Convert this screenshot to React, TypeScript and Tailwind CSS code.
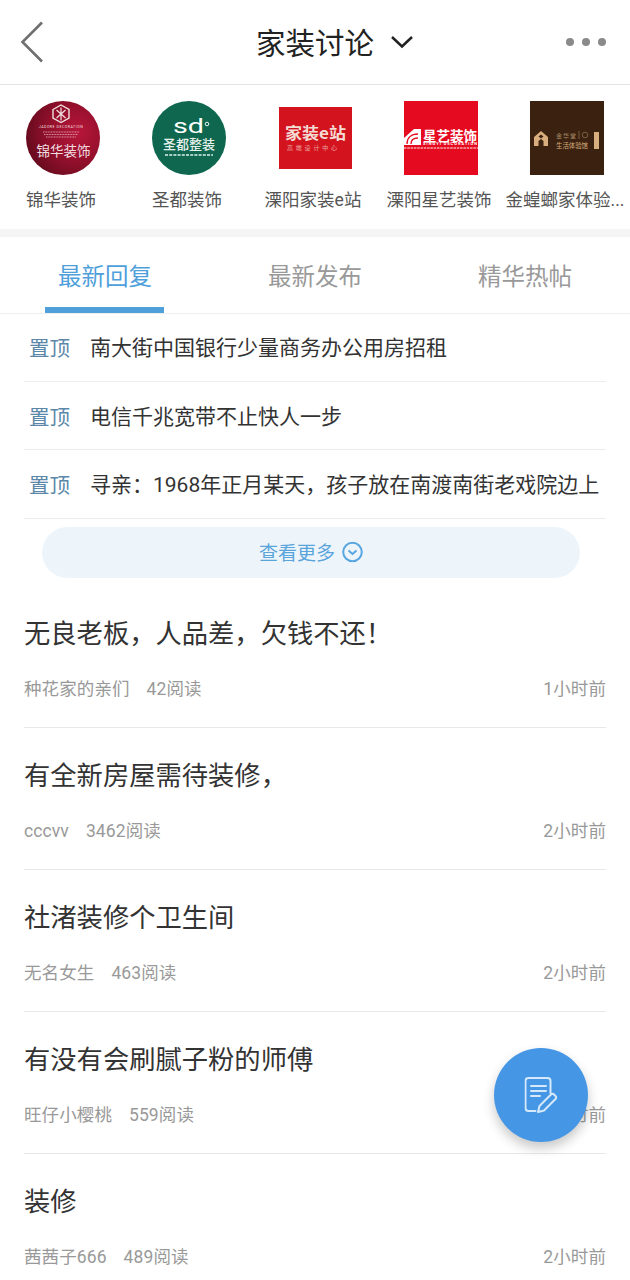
import React from "react";

const FONT = "font-['Roboto','Noto_Sans_CJK_SC',sans-serif]";
const CJK = "Noto Sans CJK SC, sans-serif";

function Logo1() {
  return (
    <svg width="74" height="74" viewBox="0 0 74 74" className="block">
      <defs>
        <radialGradient id="r1" cx="0.7" cy="0.42" r="0.8">
          <stop offset="0" stopColor="#b8163a" />
          <stop offset="0.55" stopColor="#8e0f2a" />
          <stop offset="1" stopColor="#5a0a1a" />
        </radialGradient>
      </defs>
      <circle cx="37" cy="37" r="37" fill="url(#r1)" />
      <path d="M27 8.500l8-4.500 8 4.500v8.500l-8 4.500-8-4.500z" fill="none" stroke="#efe3e0" strokeWidth="1.400" />
      <path d="M30.500 9l9 8M39.500 9l-9 8M35 6.500v13" stroke="#efe3e0" strokeWidth="1.200" />
      <text x="35" y="27" textAnchor="middle" fontSize="3.600" fill="#eedfdf" letterSpacing="0.500" fontFamily="Roboto, sans-serif">JADORE DECORATION</text>
      <path d="M17 31h36M18 33.500h34M20 36h30" stroke="#dca9b3" strokeWidth="0.900" strokeDasharray="1 .6" />
      <text x="37.500" y="54.500" textAnchor="middle" fontSize="13.500" fill="#f1dde0" fontFamily={CJK}>锦华装饰</text>
    </svg>
  );
}

function Logo2() {
  return (
    <svg width="74" height="74" viewBox="0 0 74 74" className="block">
      <circle cx="37" cy="37" r="37" fill="#0e674e" />
      <text x="21" y="32" fontSize="20" fill="#fff" textLength="31" lengthAdjust="spacingAndGlyphs" fontFamily="Roboto, sans-serif">sd</text>
      <circle cx="55" cy="23" r="1.800" fill="none" stroke="#fff" strokeWidth="0.900" />
      <text x="37" y="48" textAnchor="middle" fontSize="13" fontWeight="500" fill="#e6f1ec" fontFamily={CJK}>圣都整装</text>
      <path d="M13 54h48" stroke="#a9cfc2" strokeWidth="2" strokeDasharray="3 1.200" />
    </svg>
  );
}

function Logo3() {
  return (
    <svg width="73" height="62" viewBox="0 0 73 62" className="block">
      <rect width="73" height="62" fill="#d3141f" />
      <text x="6" y="32" fontSize="15.500" fontWeight="700" fill="#f4dcd4" textLength="61" lengthAdjust="spacingAndGlyphs" fontFamily={CJK}>家装e站</text>
      <text x="8" y="43" fontSize="6" fill="#eea5a0" textLength="50" fontFamily={CJK}>高端设计中心</text>
    </svg>
  );
}

function Logo4() {
  return (
    <svg width="74" height="74" viewBox="0 0 74 74" className="block">
      <rect width="74" height="74" fill="#e60a20" />
      <path d="M0 37l10-9h7v16H0z" fill="#fff" />
      <path d="M3 43c0-6 4-10 11-10M7 43c0-4 3-6 7-6" fill="none" stroke="#e60a20" strokeWidth="1.300" />
      <text x="19" y="39.500" fontSize="13.500" fontWeight="700" fill="#fff" textLength="54" fontFamily={CJK}>星艺装饰</text>
      <text x="19" y="44" fontSize="3.900" fontWeight="700" fill="#fff" textLength="54" fontFamily="Roboto, sans-serif">XINGYI DECORATION</text>
      <path d="M0 47h74" stroke="#f8a6a6" strokeWidth="1.500" strokeDasharray="2.500 .8" />
    </svg>
  );
}

function Logo5() {
  return (
    <svg width="74" height="74" viewBox="0 0 74 74" className="block">
      <rect width="74" height="74" fill="#3a2110" />
      <path d="M4 36l7-6 7 6v9h-4.500v-5L11 38l-2.500 2v5H4z" fill="#d9ae7e" />
      <path d="M8.500 35.500l2.500-2 2.500 2-2.500 2z" fill="#3a2110" />
      <text x="26" y="37" fontSize="6" fill="#a88a66" textLength="20" fontFamily={CJK}>金华堂</text>
      <text x="26" y="47" fontSize="6.400" fill="#d9ae7e" textLength="32" fontFamily={CJK}>生活体验馆</text>
      <path d="M49 30v8" stroke="#a88a66" strokeWidth="0.600" />
      <circle cx="55" cy="34" r="2.800" fill="none" stroke="#a88a66" strokeWidth="0.600" />
      <rect x="64" y="31" width="5" height="17" fill="#d9ae7e" />
    </svg>
  );
}

const shops: [string, React.ReactNode][] = [
  ["锦华装饰", <Logo1 />],
  ["圣都装饰", <Logo2 />],
  ["溧阳家装e站", <Logo3 />],
  ["溧阳星艺装饰", <Logo4 />],
  ["金蝗螂家体验...", <Logo5 />],
];

const pinned = [
  "南大街中国银行少量商务办公用房招租",
  "电信千兆宽带不止快人一步",
  "寻亲：1968年正月某天，孩子放在南渡南街老戏院边上",
];

const posts = [
  ["无良老板，人品差，欠钱不还！", "种花家的亲们", "42阅读", "1小时前"],
  ["有全新房屋需待装修，", "cccvv", "3462阅读", "2小时前"],
  ["社渚装修个卫生间", "无名女生", "463阅读", "2小时前"],
  ["有没有会刷腻子粉的师傅", "旺仔小樱桃", "559阅读", "2小时前"],
  ["装修", "茜茜子666", "489阅读", "2小时前"],
];

export default function App() {
  return (
    <div className={`${FONT} relative h-[1280px] w-[630px] overflow-hidden bg-white`}>
      {/* Header */}
      <header className="flex h-[85px] items-center border-b border-[#e4e4e4] pl-[20px] pr-[24px]">
        <svg width="24" height="44" viewBox="0 0 24 44" className="block">
          <path d="M22 2.500 2.500 22 22 41.500" fill="none" stroke="#6f6f6f" strokeWidth="2.600" />
        </svg>
        <div className="ml-[212px] flex items-center">
          <span className="pt-[4px] text-[29.500px] leading-[40px] text-[#222]">家装讨论</span>
          <svg width="24" height="14" viewBox="0 0 24 14" className="ml-[16px] block">
            <path d="M2 2l10 9.500L22 2" fill="none" stroke="#222" strokeWidth="2.500" />
          </svg>
        </div>
        <div className="ml-auto flex gap-[8px]">
          <span className="h-[8px] w-[8px] rounded-full bg-[#8a8a8a]" />
          <span className="h-[8px] w-[8px] rounded-full bg-[#8a8a8a]" />
          <span className="h-[8px] w-[8px] rounded-full bg-[#8a8a8a]" />
        </div>
      </header>

      {/* Shops */}
      <section className="grid h-[152px] grid-cols-[repeat(5,126px)] border-b-[8px] border-[#f5f5f5] pt-[16px]">
        {shops.map(([name, logo]) => (
          <div key={name} className="flex flex-col items-center">
            <div className="flex h-[74px] items-center">{logo}</div>
            <span className="mt-[13px] -translate-x-[2px] whitespace-nowrap text-[17.5px] leading-[24px] text-[#555]">{name}</span>
          </div>
        ))}
      </section>

      {/* Tabs */}
      <nav className="grid h-[77px] grid-cols-[210px_210px_210px] border-b border-[#efefef]">
        <div className="relative flex h-[76px] items-center justify-center pt-[6px] text-[23.500px] text-[#4f9fdb]">
          <span>最新回复</span>
          <span className="absolute bottom-0 left-[45px] h-[6px] w-[119px] bg-[#4f9fdb]" />
        </div>
        <div className="flex h-[76px] items-center justify-center pt-[6px] text-[23.500px] text-[#999]">最新发布</div>
        <div className="flex h-[76px] items-center justify-center pt-[6px] text-[23.500px] text-[#999]">精华热帖</div>
      </nav>

      {/* Pinned */}
      <ul className="mx-[24px]">
        {pinned.map((t, i) => (
          <li
            key={t}
            className={`flex items-center border-b border-[#ececec] whitespace-nowrap ${i === 2 ? "h-[69px] pt-[4px]" : i === 1 ? "h-[68px] pt-[5px]" : "h-[68px] pt-[3px]"}`}
          >
            <span className="ml-[5px] w-[61px] text-[20.500px] text-[#5b87a8]">置顶</span>
            <span className="text-[21px] text-[#333]">{t}</span>
          </li>
        ))}
      </ul>

      <div className="ml-[42px] mr-[50px] mt-[8px] flex h-[51px] items-center justify-center rounded-full bg-[#edf5fb]">
        <span className="pt-[4px] text-[19px] text-[#5aa4dc]">查看更多</span>
        <svg width="21" height="21" viewBox="0 0 21 21" className="ml-[7px] -translate-y-[0.500px]">
          <circle cx="10.500" cy="10.500" r="9.300" fill="none" stroke="#58a6e0" strokeWidth="2" />
          <path d="M6.500 9l4 3.500 4-3.500" fill="none" stroke="#58a6e0" strokeWidth="2" />
        </svg>
      </div>

      {/* Posts */}
      <ul className="mx-[24px] mt-[8px]">
        {posts.map(([title, author, reads, time], i) => (
          <li
            key={title}
            className={`flex h-[142px] flex-col border-[#e8e8e8] ${i === 4 ? "" : "border-b"}`}
          >
            <h2 className="pt-[28px] text-[26.300px] leading-[40px] font-normal whitespace-nowrap text-[#333]">{title}</h2>
            <div className="mt-[22px] flex justify-between text-[17.500px] leading-[26px] tracking-[0.100px] text-[#999]">
              <span className="flex gap-[17px]">
                <span>{author}</span>
                <span>{reads}</span>
              </span>
              <span>{time}</span>
            </div>
          </li>
        ))}
      </ul>

      {/* FAB */}
      <button className="absolute left-[494px] top-[1048px] flex h-[94px] w-[94px] items-center justify-center rounded-full bg-[#4597e6] shadow-[0_6px_12px_rgba(0,0,0,0.22)]">
        <svg width="33" height="36" viewBox="0 0 33 36" fill="none" stroke="#d6e9fb" strokeWidth="2" strokeLinecap="round" strokeLinejoin="round" className="translate-x-[-0.500px]">
          <path d="M11 34H4a3 3 0 0 1-3-3V4a3 3 0 0 1 3-3h19a3 3 0 0 1 3 3v12" />
          <path d="M6.500 9h15M6.500 14h15M6.500 19h9" />
          <path d="M13.500 35l1.500-6 11.500-11.500a2 2 0 0 1 3 0l1.500 1.500a2 2 0 0 1 0 3L19.500 33.500z" />
        </svg>
      </button>
    </div>
  );
}
